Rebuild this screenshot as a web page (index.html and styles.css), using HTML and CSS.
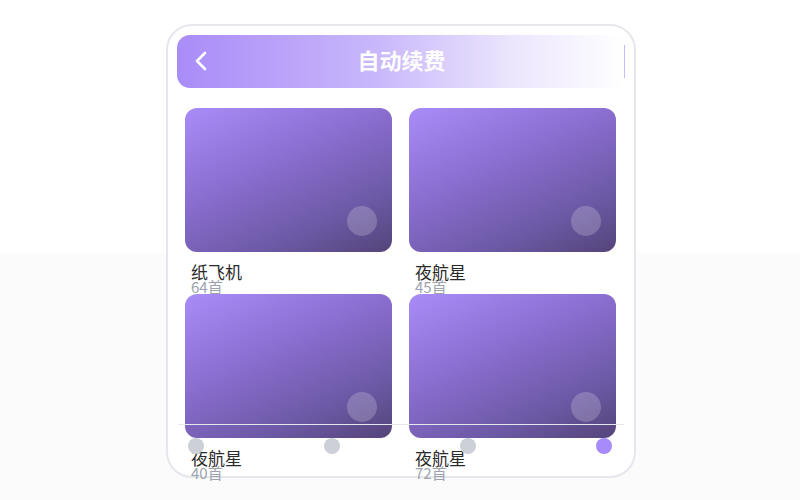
FILE: index.html
```html
<!DOCTYPE html>
<html lang="zh-CN">
<head>
    <meta charset="UTF-8">
    <meta name="viewport" content="width=device-width, initial-scale=1.0">
    <title>自动续费</title>
    <link rel="stylesheet" href="styles.css">
</head>
<body>
    <div class="phone">
        <div class="topbar">
            <span class="back">
                <svg width="14" height="20" viewBox="0 0 14 20"><path d="M11 2 L3 10 L11 18" fill="none" stroke="#fff" stroke-width="2.6" stroke-linecap="round" stroke-linejoin="round"/></svg>
            </span>
            <h1 class="title">自动续费</h1>
        </div>

        <div class="grid">
            <div class="item">
                <div class="cover"><span class="play"></span></div>
                <div class="name">纸飞机</div>
                <div class="count">64首</div>
            </div>
            <div class="item">
                <div class="cover"><span class="play"></span></div>
                <div class="name">夜航星</div>
                <div class="count">45首</div>
            </div>
            <div class="item">
                <div class="cover"><span class="play"></span></div>
                <div class="name">夜航星</div>
                <div class="count">40首</div>
            </div>
            <div class="item">
                <div class="cover"><span class="play"></span></div>
                <div class="name">夜航星</div>
                <div class="count">72首</div>
            </div>
        </div>

        <!-- step indicator laid over the list -->
        <div class="steps">
            <span class="dot"></span>
            <span class="dot"></span>
            <span class="dot"></span>
            <span class="dot active"></span>
        </div>
    </div>
</body>
</html>
```

FILE: styles.css
```css
body {
    margin: 0;
    font-family: "Noto Sans CJK SC", "Noto Sans", sans-serif;
    background: linear-gradient(to bottom, #ffffff 0, #ffffff 253px, #fbfbfc 253px);
    height: 500px;
    overflow: hidden;
}
.phone {
    position: relative;
    width: 470px;
    height: 454px;
    box-sizing: border-box;
    margin: 24px 0 0 166px;
    padding: 9px 8px 0 9px;
    border: 2px solid #e6e7ec;
    border-radius: 26px;
    background: #fff;
}
.topbar {
    position: relative;
    height: 53px;
    border-radius: 13px;
    background: linear-gradient(to right, #a98cf8 0%, #c9b8fb 45%, #ece6fd 75%, #ffffff 100%);
    display: flex;
    align-items: center;
    justify-content: center;
}
.topbar::after {
    content: "";
    position: absolute;
    right: 1px;
    top: 10px;
    bottom: 10px;
    width: 1px;
    background: #c9b8fb;
}
.back {
    position: absolute;
    left: 17px;
    top: 16px;
    display: flex;
}
.title {
    margin: 0;
    padding-bottom: 5px;
    color: #fff;
    font-size: 22px;
    font-weight: 700;
    line-height: 1;
}
.grid {
    display: grid;
    grid-template-columns: 207px 207px;
    column-gap: 17px;
    margin: 20px 0 0 8px;
}
.cover {
    position: relative;
    height: 144px;
    border-radius: 12px;
    background: linear-gradient(155deg, #a98cf8 0%, #8a6ed0 40%, #6c59a5 75%, #544479 100%);
}
.play {
    position: absolute;
    right: 15px;
    bottom: 16px;
    width: 30px;
    height: 30px;
    border-radius: 50%;
    background: rgba(255, 255, 255, 0.2);
}
.name {
    margin-top: 11px;
    padding-left: 6px;
    font-size: 17px;
    line-height: 17px;
    color: #2a2a2a;
}
.count {
    padding-left: 6px;
    font-size: 15px;
    line-height: 14px;
    color: #9ca3af;
}
.steps {
    position: absolute;
    left: 10px;
    right: 10px;
    top: 398px;
    height: 1px;
    background: #e6e7ec;
}
.dot {
    position: absolute;
    top: 14px;
    width: 16px;
    height: 16px;
    border-radius: 50%;
    background: #cdd0d6;
}
.dot:nth-child(1) { left: 10px; }
.dot:nth-child(2) { left: 146px; }
.dot:nth-child(3) { left: 282px; }
.dot:nth-child(4) { left: 418px; }
.dot.active {
    background: #a78bfa;
}
```
